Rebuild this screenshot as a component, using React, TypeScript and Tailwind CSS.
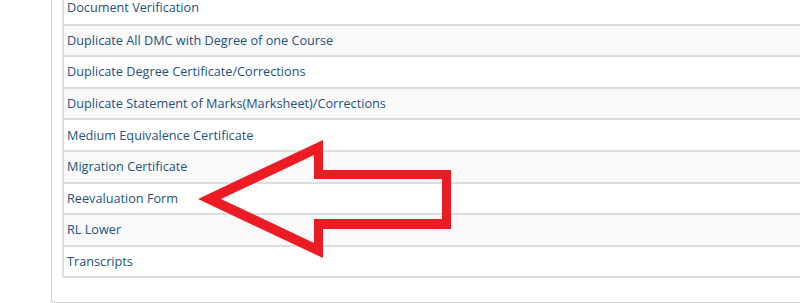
import React from 'react';

const services = [
  'Document Verification',
  'Duplicate All DMC with Degree of one Course',
  'Duplicate Degree Certificate/Corrections',
  'Duplicate Statement of Marks(Marksheet)/Corrections',
  'Medium Equivalence Certificate',
  'Migration Certificate',
  'Reevaluation Form',
  'RL Lower',
  'Transcripts',
];

// red outline arrow pointing at "Reevaluation Form"
const Arrow: React.FC = () => (
  <svg
    className="absolute left-0 top-0 pointer-events-none"
    width="800"
    height="303"
    viewBox="0 0 800 303"
  >
    <path
      fillRule="evenodd"
      fill="#ed1c24"
      d="M198 199 L323 140 L323 170 L451 170 L451 229 L323 229 L323 258 Z
         M221 199 L314 155 L314 179 L442 179 L442 219 L314 219 L314 243 Z"
    />
  </svg>
);

export default function App() {
  return (
    <div
      className="relative w-[800px] h-[303px] overflow-hidden bg-white"
      style={{ fontFamily: '"Open Sans", "Liberation Sans", sans-serif' }}
    >
      <div className="ml-[51px] mr-[-20px] -mt-[8px] border-l border-b border-[#d0d0d0] rounded-bl-[4px] pl-[10px] pb-[24px]">
        <div className="border-l-2 border-b-2 border-[#dddddd]">
          {services.map((name, i) => (
            <div
              key={name}
              className={`flex items-center h-[31.6px] pl-[3px] text-[12.7px] text-[#23527c] border-t-2 border-[#dddddd] first:border-t-0 ${
                i % 2 === 1 ? 'bg-[#f9f9f9]' : 'bg-white'
              }`}
            >
              {name}
            </div>
          ))}
        </div>
      </div>
      <Arrow />
    </div>
  );
}
